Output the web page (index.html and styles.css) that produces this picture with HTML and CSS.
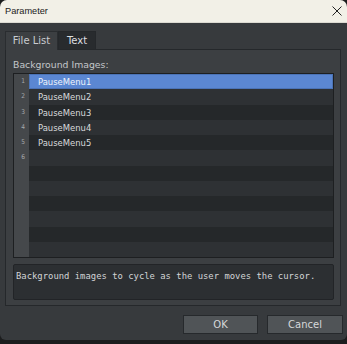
FILE: index.html
```html
<!DOCTYPE html>
<html>
<head>
<meta charset="utf-8">
<link rel="stylesheet" href="styles.css">
</head>
<body>
<div class="window">
  <div class="titlebar">
    <span class="title">Parameter</span>
    <svg class="close" width="10" height="10" viewBox="0 0 10 10"><path d="M0.5 0.5 L9.5 9.5 M9.5 0.5 L0.5 9.5" stroke="#222" stroke-width="1" fill="none"/></svg>
  </div>
  <div class="content">
    <div class="tabs">
      <div class="tab active">File List</div>
      <div class="tab">Text</div>
    </div>
    <div class="panel">
      <div class="label">Background Images:</div>
      <div class="list">
        <div class="row odd sel"><span class="num">1</span><span class="item">PauseMenu1</span></div>
        <div class="row even"><span class="num">2</span><span class="item">PauseMenu2</span></div>
        <div class="row odd"><span class="num">3</span><span class="item">PauseMenu3</span></div>
        <div class="row even"><span class="num">4</span><span class="item">PauseMenu4</span></div>
        <div class="row odd"><span class="num">5</span><span class="item">PauseMenu5</span></div>
        <div class="row even"><span class="num">6</span><span class="item"></span></div>
        <div class="row odd"><span class="num"></span><span class="item"></span></div>
        <div class="row even"><span class="num"></span><span class="item"></span></div>
        <div class="row odd"><span class="num"></span><span class="item"></span></div>
        <div class="row even"><span class="num"></span><span class="item"></span></div>
        <div class="row odd"><span class="num"></span><span class="item"></span></div>
        <div class="row even"><span class="num"></span><span class="item"></span></div>
      </div>
      <div class="desc">Background images to cycle as the user moves the cursor.</div>
    </div>
    <div class="buttons">
      <div class="btn">OK</div>
      <div class="btn">Cancel</div>
    </div>
  </div>
</div>
</body>
</html>
```
FILE: styles.css
```css
html, body { margin: 0; padding: 0; }
body {
  background: #1c1d1e;
  width: 347px;
  height: 344px;
  overflow: hidden;
}
.window {
  width: 347px;
  height: 340px;
  border-radius: 7px 7px 6px 6px;
  overflow: hidden;
  background: #373a3d;
  display: flex;
  flex-direction: column;
}
.titlebar {
  height: 23px;
  flex: none;
  background: #f2f0e7;
  border-bottom: 1px solid #dcdad2;
  box-sizing: border-box;
  display: flex;
  align-items: center;
  justify-content: space-between;
  padding: 0 5px 0 5px;
}
.title {
  font-family: "Liberation Sans", Arial, sans-serif;
  font-size: 9.2px;
  color: #1a1a1a;
}
.close { display: block; margin-right: 0; }
.content {
  flex: 1;
  display: flex;
  flex-direction: column;
  padding: 8px 6px 0 5px;
}
.tabs {
  display: flex;
  height: 18px;
  position: relative;
  z-index: 1;
}
.tab {
  font-family: "DejaVu Sans", sans-serif;
  font-size: 10px;
  color: #dcdee0;
  box-sizing: border-box;
  height: 18px;
  display: flex;
  align-items: center;
  justify-content: center;
  border: 1px solid #25282b;
  border-bottom: none;
  background: #282b2e;
  width: 38px;
}
.tab.active {
  width: 53px;
  height: 19px;
  background: #3c3f42;
  color: #c9ccd0;
  border-color: #2a2d30;
  padding-bottom: 1px;
}
.panel {
  background: #3c3f42;
  border: 1px solid #25282b;
  height: 257px;
  box-sizing: border-box;
  padding: 7px 6px 0 7px;
  display: flex;
  flex-direction: column;
}
.label {
  font-family: "DejaVu Sans", sans-serif;
  font-size: 9.3px;
  color: #c4c7ca;
  height: 15px;
  line-height: 15px;
  margin-bottom: 1px;
}
.list {
  border: 1px solid #1d1f21;
  background: #2e3134;
  display: flex;
  flex-direction: column;
}
.row {
  height: 15.25px;
  display: flex;
}
.num {
  width: 15px;
  flex: none;
  background: #45484b;
  font-family: "DejaVu Sans Condensed", "DejaVu Sans", sans-serif;
  font-size: 6.5px;
  color: #a6a9ac;
  text-align: right;
  box-sizing: border-box;
  padding-right: 4px;
  line-height: 15.25px;
}
.item {
  flex: 1;
  font-family: "DejaVu Sans Condensed", "DejaVu Sans", sans-serif;
  font-size: 9.4px;
  color: #d8dadc;
  padding-left: 9px;
  line-height: 15.25px;
}
.row.odd .item { background: #25282a; }
.row.even .item { background: #2e3134; }
.row.sel .item {
  background: #5b87d2;
  color: #eef3fb;
  box-shadow: inset 0 0 0 1px #4b73b6;
}
.desc {
  margin-top: 6px;
  height: 36px;
  box-sizing: border-box;
  background: #2c2f32;
  border: 1px solid #222427;
  border-radius: 2px;
  font-family: "DejaVu Sans Mono", monospace;
  font-size: 8.9px;
  color: #d2d4d6;
  padding: 6px 2px;
  line-height: 11px;
}
.buttons {
  display: flex;
  justify-content: flex-end;
  gap: 9px;
  margin-top: 9px;
  margin-right: -2px;
}
.btn {
  width: 75px;
  height: 19px;
  box-sizing: border-box;
  background: #505457;
  border: 1px solid #26292c;
  font-family: "DejaVu Sans", sans-serif;
  font-size: 10px;
  color: #d6d8da;
  display: flex;
  align-items: center;
  justify-content: center;
}
.btn + .btn { width: 76px; }
```
